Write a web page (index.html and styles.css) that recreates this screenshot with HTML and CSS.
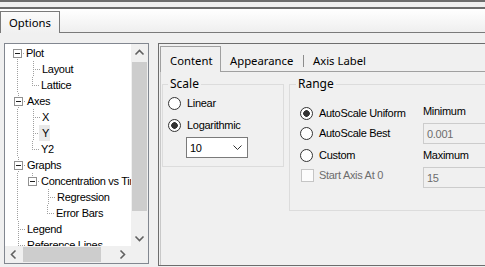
FILE: index.html
```html
<!DOCTYPE html>
<html>
<head>
<meta charset="utf-8">
<link rel="stylesheet" href="styles.css">
</head>
<body>
<div class="win">
  <div class="bar-top"></div>
  <div class="bar-gap"></div>
  <div class="bar-line"></div>
  <div class="strip">
    <div class="main-tab">Options</div>
    <div class="strip-fill"></div>
  </div>
  <div class="page">
    <div class="tree-box">
      <div class="tree-main">
        <div class="tree-view">
          <div class="row"><span class="c f"><span class="box"></span></span><span class="t">Plot</span></div>
          <div class="row"><span class="c v"></span><span class="c t"></span><span class="t">Layout</span></div>
          <div class="row"><span class="c v"></span><span class="c l"></span><span class="t">Lattice</span></div>
          <div class="row"><span class="c t"><span class="box"></span></span><span class="t">Axes</span></div>
          <div class="row"><span class="c v"></span><span class="c t"></span><span class="t">X</span></div>
          <div class="row"><span class="c v"></span><span class="c t"></span><span class="t sel">Y</span></div>
          <div class="row"><span class="c v"></span><span class="c l"></span><span class="t">Y2</span></div>
          <div class="row"><span class="c t"><span class="box"></span></span><span class="t">Graphs</span></div>
          <div class="row"><span class="c v"></span><span class="c l"><span class="box"></span></span><span class="t">Concentration vs Time</span></div>
          <div class="row"><span class="c v"></span><span class="c"></span><span class="c t"></span><span class="t">Regression</span></div>
          <div class="row"><span class="c v"></span><span class="c"></span><span class="c l"></span><span class="t">Error Bars</span></div>
          <div class="row"><span class="c t"></span><span class="t">Legend</span></div>
          <div class="row"><span class="c t"></span><span class="t">Reference Lines</span></div>
        </div>
        <div class="vscroll">
          <div class="sbtn"><svg width="17" height="17"><path d="M4.5 10.5 L8.5 6.5 L12.5 10.5" fill="none" stroke="#606060" stroke-width="1.6"/></svg></div>
          <div class="vthumb"></div>
          <div class="sfill"></div>
          <div class="sbtn"><svg width="17" height="17"><path d="M4.5 7.5 L8.5 11.5 L12.5 7.5" fill="none" stroke="#606060" stroke-width="1.6"/></svg></div>
        </div>
      </div>
      <div class="hrow">
        <div class="hscroll">
          <div class="sbtn"><svg width="17" height="17"><path d="M10.5 4.5 L6.5 8.5 L10.5 12.5" fill="none" stroke="#606060" stroke-width="1.6"/></svg></div>
          <div class="hthumb"></div>
          <div class="sfill"></div>
          <div class="sbtn"><svg width="17" height="17"><path d="M6.5 4.5 L10.5 8.5 L6.5 12.5" fill="none" stroke="#606060" stroke-width="1.6"/></svg></div>
        </div>
        <div class="corner"></div>
      </div>
    </div>
    <div class="splitter"></div>
    <div class="panel">
      <div class="tabs">
        <div class="tab tab-sel">Content</div>
        <div class="tab tab-app">Appearance</div>
        <div class="tab-sep"></div>
        <div class="tab tab-axis">Axis Label</div>
        <div class="tab-fill"></div>
      </div>
      <div class="tabpage">
        <fieldset class="grp grp-scale">
          <legend>Scale</legend>
          <div class="opt opt-first"><span class="radio"></span><span>Linear</span></div>
          <div class="opt opt-log"><span class="radio on"></span><span>Logarithmic</span></div>
          <div class="combo"><span>10</span><svg width="9" height="5"><path d="M0.5 0.5 L4.5 4.5 L8.5 0.5" fill="none" stroke="#333" stroke-width="1"/></svg></div>
        </fieldset>
        <fieldset class="grp grp-range">
          <legend>Range</legend>
          <div class="range-cols">
            <div class="range-left">
              <div class="opt opt-r1"><span class="radio on"></span><span>AutoScale Uniform</span></div>
              <div class="opt"><span class="radio"></span><span>AutoScale Best</span></div>
              <div class="opt opt-r3"><span class="radio"></span><span>Custom</span></div>
              <div class="opt opt-chk"><span class="check"></span><span class="dis">Start Axis At 0</span></div>
            </div>
            <div class="range-right">
              <div class="lbl lbl-min">Minimum</div>
              <div class="tbox">0.001</div>
              <div class="lbl lbl-max">Maximum</div>
              <div class="tbox">15</div>
            </div>
          </div>
        </fieldset>
      </div>
    </div>
  </div>
</div>
</body>
</html>
```

FILE: styles.css
```css
* { box-sizing: border-box; }
html, body { margin: 0; padding: 0; }
body {
  width: 485px; height: 267px; overflow: hidden;
  background: #f0f0f0;
  font-family: "Liberation Sans", Arial, sans-serif;
  font-size: 11px; line-height: 16px; letter-spacing: -0.3px; color: #000;
}
.win { display: flex; flex-direction: column; height: 267px; }
.bar-top { height: 2px; background: #6d6d6d; flex: none; }
.bar-gap { height: 5px; background: #f0f0f0; flex: none; }
.bar-line { height: 2px; background: #6d6d6d; flex: none; }
.strip { display: flex; height: 24px; flex: none; background: linear-gradient(#ffffff, #eeeeee); }
.main-tab {
  width: 60px; height: 22px; margin-top: 2px; flex: none;
  border: 1px solid #7a7a7a; border-bottom: none;
  background: linear-gradient(#fbfbfb, #f0f0f0);
  padding: 3px 0 0 8px;
  font-family: "Noto Sans", "Open Sans", sans-serif; font-size: 11.3px; letter-spacing: 0;
}
.strip-fill { flex: 1; border-bottom: 1px solid #7a7a7a; }

.page { display: flex; flex: 1; padding: 10px 0 0 4px; overflow: hidden; }

.tree-box {
  width: 145px; height: 221px; flex: none;
  border: 1px solid #828790; background: #fff;
  display: flex; flex-direction: column;
}
.tree-main { display: flex; height: 202px; }
.tree-view { width: 126px; overflow: hidden; padding-top: 1px; }
.row { display: flex; height: 16px; padding-left: 5px; white-space: nowrap; align-items: center; }
.c { width: 15px; height: 16px; flex: none; display: flex; align-items: center; }
.c.v { background: repeating-linear-gradient(to bottom, #a0a0a0 0 1px, transparent 1px 2px) 7px 0 / 1px 16px no-repeat; }
.c.t {
  background:
    repeating-linear-gradient(to right, #a0a0a0 0 1px, transparent 1px 2px) 7px 8px / 8px 1px no-repeat,
    repeating-linear-gradient(to bottom, #a0a0a0 0 1px, transparent 1px 2px) 7px 0 / 1px 16px no-repeat;
}
.c.l {
  background:
    repeating-linear-gradient(to right, #a0a0a0 0 1px, transparent 1px 2px) 7px 8px / 8px 1px no-repeat,
    repeating-linear-gradient(to bottom, #a0a0a0 0 1px, transparent 1px 2px) 7px 0 / 1px 9px no-repeat;
}
.c.f {
  background:
    repeating-linear-gradient(to right, #a0a0a0 0 1px, transparent 1px 2px) 7px 8px / 8px 1px no-repeat,
    repeating-linear-gradient(to bottom, #a0a0a0 0 1px, transparent 1px 2px) 7px 8px / 1px 8px no-repeat;
}
.box {
  width: 9px; height: 9px; margin-left: 3px;
  border: 1px solid #919191; background: #fff;
  display: flex; align-items: center; justify-content: center;
}
.box::after { content: ""; width: 5px; height: 1px; background: #1f1f1f; }
.t { margin-left: 1px; line-height: 16px; }
.t.sel { margin-left: -2px; padding: 0 1px 0 3px; background: #e9e9e9; height: 16px; }

.vscroll { width: 17px; background: #f0f0f0; display: flex; flex-direction: column; }
.sbtn { width: 17px; height: 17px; flex: none; }
.sbtn svg { display: block; }
.vthumb { height: 149px; margin: 1px 1px 0 1px; background: #cdcdcd; flex: none; }
.sfill { flex: 1; }
.hrow { display: flex; height: 17px; }
.hscroll { width: 126px; background: #f0f0f0; display: flex; }
.hthumb { width: 78px; margin: 1px 0 1px 1px; background: #cdcdcd; flex: none; }
.corner { width: 17px; background: #f0f0f0; }

.splitter { width: 9px; flex: none; }

.panel {
  width: 340px; height: 223px; flex: none;
  border: 1px solid #6d6d6d;
  padding: 2px 0 0 1px;
  display: flex; flex-direction: column;
}
.tabs {
  display: flex; align-items: flex-end; height: 26px; flex: none;
  font-family: "Noto Sans", "Open Sans", sans-serif; font-size: 11.3px; letter-spacing: 0;
}
.tab { height: 24px; padding: 5px 0 0 9px; border-bottom: 1px solid #a0a0a0; flex: none; }
.tab-sel {
  width: 61px; height: 26px; padding: 6px 0 0 9px;
  border: 1px solid #a0a0a0; border-bottom: none; background: #f0f0f0;
}
.tab-app { width: 82px; }
.tab-sep {
  width: 1px; height: 24px; flex: none; border-bottom: 1px solid #a0a0a0;
  background: linear-gradient(to bottom, transparent 7px, #8c8c8c 7px 19px, transparent 19px);
}
.tab-axis { width: 72px; }
.tab-fill { flex: 1; height: 24px; border-bottom: 1px solid #a0a0a0; }

.tabpage {
  flex: 1; display: flex; align-items: flex-start;
  border-left: 1px solid #c8c8c8;
  padding: 4px 0 0 1px;
}
.grp { margin: 0; border: 1px solid #dcdcdc; min-width: 0; flex: none; }
.grp legend {
  padding: 0 2px; line-height: 16px;
  font-family: "Noto Sans", "Open Sans", sans-serif; font-size: 12px; letter-spacing: 0;
}
.grp-scale { width: 122px; padding: 0 0 8px 5px; }
.grp-range { width: 250px; margin-left: 5px; padding: 0 0 22px 6px; }

.opt { display: flex; align-items: center; height: 20px; gap: 6px; white-space: nowrap; }
.opt-first { margin-top: 1px; }
.opt-log { margin-top: 2px; }
.radio {
  width: 13px; height: 13px; flex: none; border-radius: 50%;
  border: 1px solid #333; background: #fff;
}
.radio.on { background: radial-gradient(circle, #333 0 3px, #fff 3.6px); }
.combo {
  width: 62px; height: 21px; margin: 2px 0 0 18px;
  border: 1px solid #7a7a7a; background: #fff;
  display: flex; align-items: center; justify-content: space-between;
  padding: 0 5px 0 3px;
}
.combo svg { display: block; }

.range-cols { display: grid; grid-template-columns: 127px auto; }
.range-left .opt { padding-left: 4px; }
.opt-r1 { margin-top: 11px; }
.opt-r3 { margin-top: 2px; }
.range-left .opt-chk { padding-left: 5px; gap: 5px; }
.check { width: 13px; height: 13px; flex: none; border: 1px solid #c5c5c5; background: #fcfcfc; }
.dis { color: #6d6d6d; }
.lbl { line-height: 16px; }
.lbl-min { margin-top: 11px; }
.lbl-max { margin-top: 3px; }
.tbox {
  width: 80px; height: 21px; margin-top: 4px;
  border: 1px solid #cccccc; background: #f0f0f0; color: #6d6d6d;
  padding-left: 3px; display: flex; align-items: center;
}
```
